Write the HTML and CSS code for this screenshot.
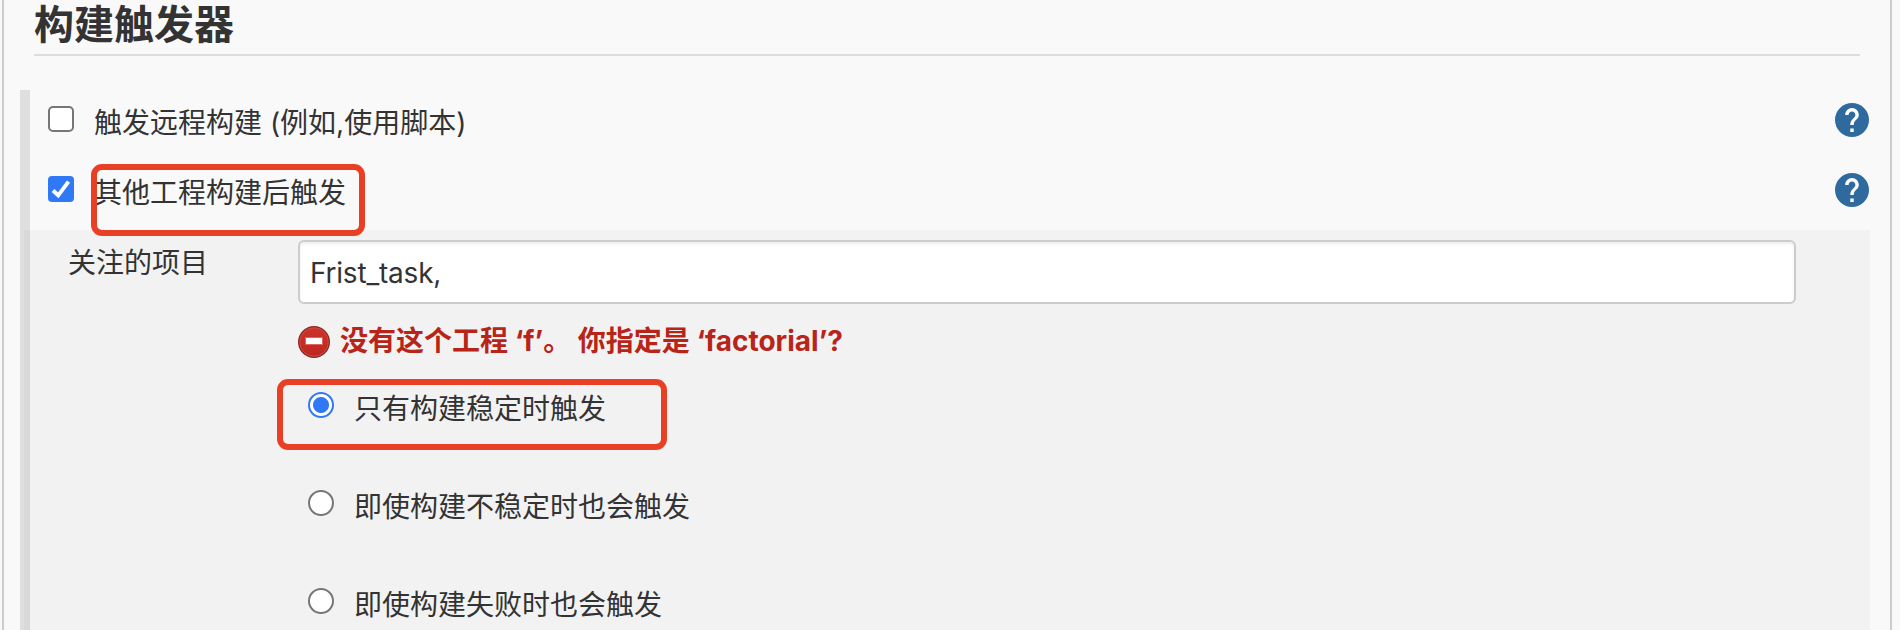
FILE: index.html
```html
<!DOCTYPE html>
<html lang="zh-CN">
<head>
<meta charset="utf-8">
<title>构建触发器</title>
<link rel="stylesheet" href="styles.css">
</head>
<body>
<svg class="defs" aria-hidden="true">
  <symbol id="help" viewBox="2 2 20 20">
    <circle cx="12" cy="12" r="10" fill="#2f6a9f"/>
    <path fill="#fff" d="M13 19h-2v-2h2v2zm2.07-7.75-.9.92C13.450 12.900 13 13.500 13 15h-2v-.5c0-1.100.45-2.100 1.170-2.830l1.240-1.260c.37-.36.59-.86.59-1.410 0-1.100-.9-2-2-2s-2 .9-2 2H8c0-2.210 1.790-4 4-4s4 1.790 4 4c0 .88-.36 1.680-.93 2.250z"/>
  </symbol>
</svg>
<main class="panel">
  <h1 class="title"><span class="label">构建触发器</span></h1>
  <div class="triggers">
    <div class="row">
      <span class="checkbox"></span>
      <span class="label">触发远程构建 (例如,使用脚本)</span>
      <svg class="help"><use href="#help"/></svg>
    </div>
    <div class="row">
      <span class="checkbox checked"><svg viewBox="0 0 26 26"><path d="M5 14.500 10.200 19.300 20.500 5.600" fill="none" stroke="#fff" stroke-width="3.900"/></svg></span>
      <span class="label">其他工程构建后触发</span>
      <svg class="help"><use href="#help"/></svg>
      <span class="mark mark-row"></span>
    </div>
    <div class="nested">
      <div class="setting">关注的项目</div>
      <div class="fields">
        <div class="input">Frist_task,</div>
        <div class="error">
          <svg class="error-icon" viewBox="0 0 32 32">
            <defs><linearGradient id="red" x1="0" y1="0" x2="0" y2="1"><stop offset="0" stop-color="#cf332b"/><stop offset="1" stop-color="#bd261f"/></linearGradient></defs>
            <circle cx="16" cy="16" r="16" fill="#8d2a27"/>
            <circle cx="16" cy="16" r="14.300" fill="url(#red)" stroke="#cc4b45" stroke-width="1"/>
            <path d="M7 11h18v8H7z" fill="#d9655f"/>
            <path d="M8 12h16v6H8z" fill="#fff"/>
          </svg>
          <span class="message">没有这个工程 ‘f’。 你指定是 ‘factorial’?</span>
        </div>
        <div class="option">
          <span class="radio on"></span><span class="label">只有构建稳定时触发</span>
          <span class="mark mark-option"></span>
        </div>
        <div class="option"><span class="radio"></span><span class="label">即使构建不稳定时也会触发</span></div>
        <div class="option"><span class="radio"></span><span class="label">即使构建失败时也会触发</span></div>
      </div>
    </div>
  </div>
</main>
</body>
</html>
```
FILE: styles.css
```css
* { box-sizing: border-box; }
body {
  margin: 0;
  height: 630px;
  overflow: hidden;
  background: #f9f9f9;
  color: #333;
  font: 28px/40px Inter, "Noto Sans CJK SC", sans-serif;
}
.defs { position: absolute; width: 0; height: 0; }
.panel {
  height: 630px;
  margin: 0 8px 0 2px;
  padding-left: 16px;
  padding-right: 20px;
  border: solid #ccc;
  border-width: 0 2px;
  overflow: hidden;
}
.title {
  height: 56px;
  margin: 0 10px 34px 14px;
  border-bottom: 2px solid #ddd;
  font-size: 40px;
  line-height: 50px;
  font-weight: 700;
}
.triggers {
  height: 540px;
  border-left: 10px solid #dfdfdf;
}
.row {
  position: relative;
  display: flex;
  align-items: flex-start;
  height: 70px;
  padding: 13px 1px 0 18px;
}
.row .label { margin: 0 0 0 20px; }
.help { width: 34px; height: 34px; margin-left: auto; }
.checkbox {
  width: 26px;
  height: 26px;
  margin-top: 3px;
  border: 2px solid #767676;
  border-radius: 5px;
  background: #fff;
}
.checkbox.checked { border: 0; border-radius: 4px; background: #3079f6; }
.checkbox svg { display: block; width: 26px; height: 26px; }
.nested {
  display: flex;
  height: 400px;
  margin-left: -6px;
  padding-top: 10px;
  border-left: 6px solid #d9d9d9;
  background: #f2f2f2;
}
.setting { width: 268px; padding-left: 38px; margin-top: 3px; }
.fields { width: 1498px; }
.input {
  height: 64px;
  padding: 11px 10px 9px;
  border: 2px solid #ccc;
  border-radius: 6px;
  background: #fff;
  box-shadow: inset 0 2px 3px rgba(0, 0, 0, .07);
  letter-spacing: -.2px;
}
.error {
  display: flex;
  align-items: center;
  gap: 10px;
  height: 32px;
  margin: 22px 0 24px;
  color: #b92419;
  font-weight: 700;
  white-space: nowrap;
}
.error-icon { width: 32px; height: 32px; }
.message { padding-bottom: 2px; }
.option {
  position: relative;
  display: flex;
  align-items: flex-start;
  height: 98px;
  padding: 5px 0 0 10px;
}
.option .label { margin: 2px 0 0 20px; }
.radio {
  width: 26px;
  height: 26px;
  margin-top: 5px;
  border: 2px solid #767676;
  border-radius: 50%;
  background: #fff;
}
.radio.on {
  border-color: #3079f6;
  background: radial-gradient(circle, #3079f6 7.500px, #fff 8.500px);
}
.mark {
  position: absolute;
  border: 6px solid #e94025;
  border-radius: 11px;
}
.mark-row { left: 61px; top: 4px; width: 274px; height: 72px; z-index: 1; }
.mark-option { left: -21px; top: -3px; width: 390px; height: 71px; }
```
